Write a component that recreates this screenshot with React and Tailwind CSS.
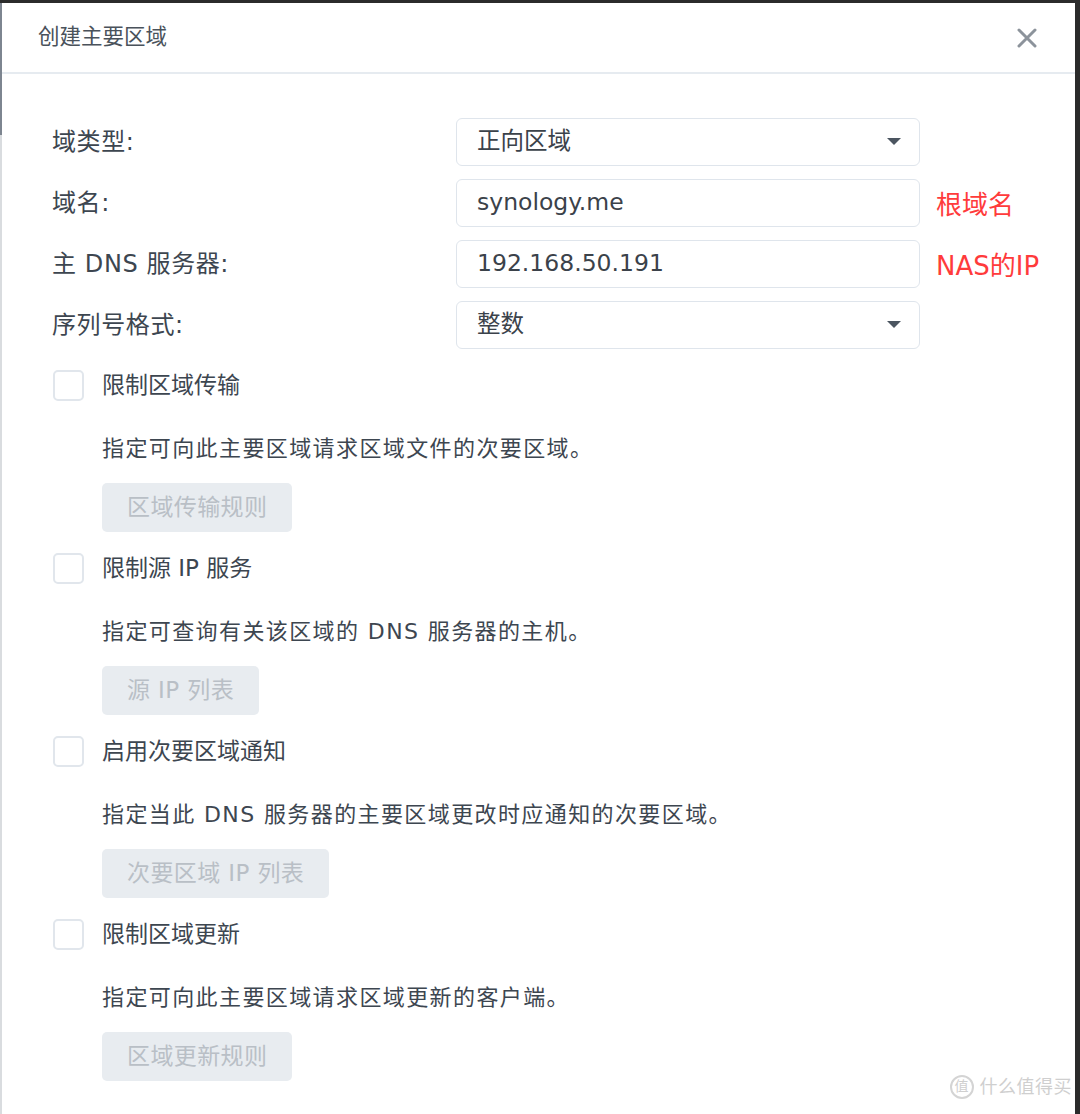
import React from "react";

const font = { fontFamily: '"DejaVu Sans", "Noto Sans CJK SC", sans-serif' };

const Caret = () => (
  <svg width="14" height="8" viewBox="0 0 14 8" className="shrink-0">
    <path d="M0 0 L14 0 L7 7 Z" fill="#4b5560" />
  </svg>
);

const FieldRow = ({ label, children, note }) => (
  <div className="flex items-center h-[48px]">
    <div className="w-[404px] text-[24px] tracking-[0.6px] text-[#3d4650]">{label}</div>
    <div className="w-[464px] h-[48px] rounded-[6px] border border-[#dfe5ec] flex items-center justify-between pl-[20px] pr-[18px] text-[23.5px] text-[#3b424a]">
      {children}
    </div>
    {note && (
      <div className="ml-[16px] mt-[4px] text-[26px] text-[#ff3b3b] whitespace-nowrap">{note}</div>
    )}
  </div>
);

const Section = ({ title, desc, button, first }) => (
  <div className={`flex flex-col ${first ? "" : "mt-[21px]"}`}>
    <div className="flex items-center h-[31px]">
      <div className="w-[31px] h-[31px] rounded-[5px] border-2 border-[#e1e6ec] bg-white" />
      <div className="ml-[18px] text-[23px] text-[#3d4650]">{title}</div>
    </div>
    <div className="ml-[49px] mt-[32px] h-[30px] flex items-center text-[22px] text-[#3d4650] tracking-[1.4px]">
      {desc}
    </div>
    <div className="ml-[49px] mt-[20px]">
      <div className="inline-flex items-center h-[49px] px-[25px] rounded-[5px] bg-[#e8ecf0] text-[23px] text-[#b9bfc6] tracking-[0.4px]">
        {button}
      </div>
    </div>
  </div>
);

export default function App() {
  return (
    <div className="w-[1080px] h-[1114px] flex flex-col bg-[#2b2b2b]" style={font}>
      <div className="h-[3px]" />
      <div className="flex flex-1">
        <div className="w-[2px] flex flex-col">
          <div className="h-[132px] bg-[#7d8590]" />
          <div className="flex-1 bg-[#d9dcdf]" />
        </div>
        <div className="flex-1 bg-white flex flex-col relative">
          {/* Header */}
          <div className="h-[71px] flex items-center justify-between pl-[36px] pr-[38px] border-b-2 border-[#e6ebf0]">
            <div className="text-[21.5px] text-[#4a525b]">创建主要区域</div>
            <svg width="20" height="20" viewBox="0 0 20 20">
              <path d="M2 2 L18 18 M18 2 L2 18" stroke="#8c939b" strokeWidth="3" strokeLinecap="round" />
            </svg>
          </div>

          {/* Body */}
          <div className="pl-[50px] pt-[44px] flex flex-col">
            <div className="flex flex-col gap-[13px]">
              <FieldRow label="域类型:">
                <span>正向区域</span>
                <Caret />
              </FieldRow>
              <FieldRow label="域名:" note="根域名">
                <span>synology.me</span>
              </FieldRow>
              <FieldRow label="主 DNS 服务器:" note="NAS的IP">
                <span>192.168.50.191</span>
              </FieldRow>
              <FieldRow label="序列号格式:">
                <span>整数</span>
                <Caret />
              </FieldRow>
            </div>

            <div className="mt-[21px] pl-[1px]">
              <Section first title="限制区域传输" desc="指定可向此主要区域请求区域文件的次要区域。" button="区域传输规则" />
              <Section title="限制源 IP 服务" desc="指定可查询有关该区域的 DNS 服务器的主机。" button="源 IP 列表" />
              <Section title="启用次要区域通知" desc="指定当此 DNS 服务器的主要区域更改时应通知的次要区域。" button="次要区域 IP 列表" />
              <Section title="限制区域更新" desc="指定可向此主要区域请求区域更新的客户端。" button="区域更新规则" />
            </div>
          </div>

          {/* Watermark */}
          <div className="absolute right-[3px] bottom-[14px] flex items-center gap-[6px] text-[#cfcfcf]">
            <div className="w-[24px] h-[24px] rounded-full border-2 border-[#d4d4d4] flex items-center justify-center text-[14px]">值</div>
            <div className="text-[18px] tracking-[0.5px]">什么值得买</div>
          </div>
        </div>
        <div className="w-[5px]" />
      </div>
    </div>
  );
}
